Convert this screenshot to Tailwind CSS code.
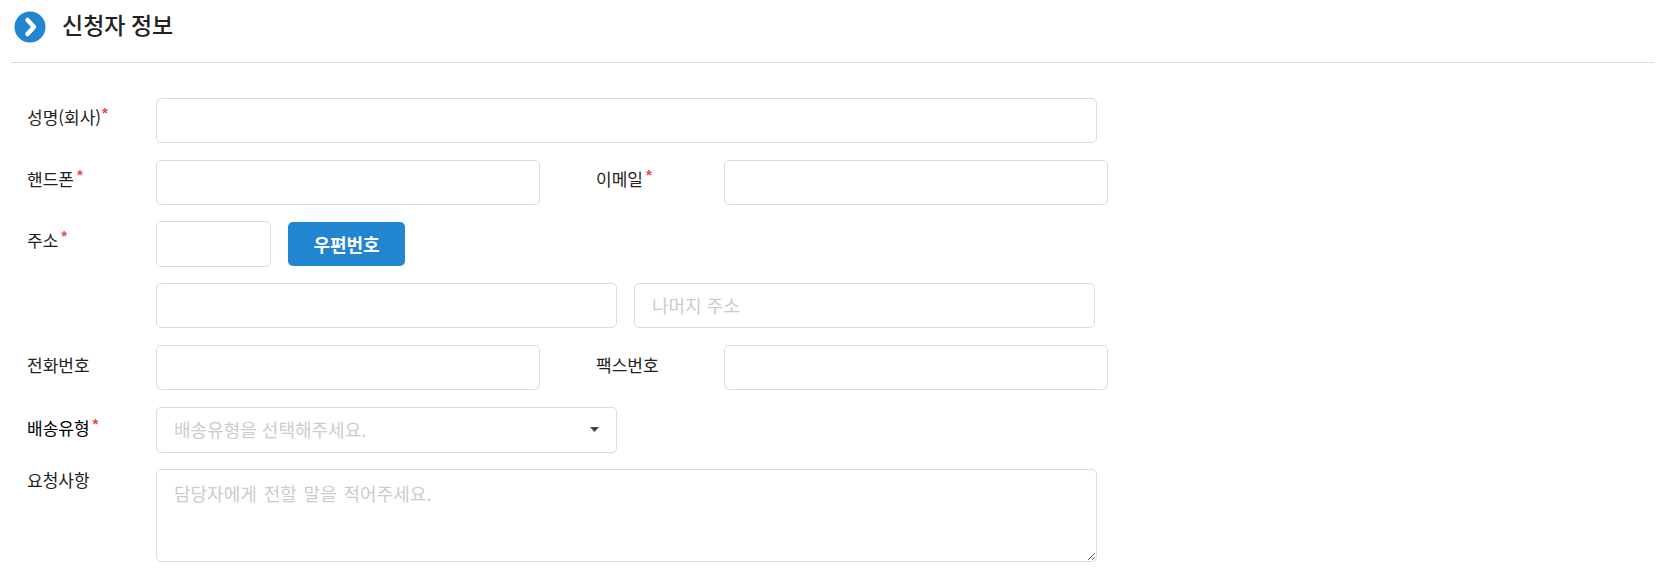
<!DOCTYPE html>
<html lang="ko">
<head>
    <meta charset="UTF-8" />
    <meta name="viewport" content="width=device-width, initial-scale=1.0" />
    <title>신청자 정보</title>
    <script src="https://cdn.jsdelivr.net/npm/@tailwindcss/browser@4"></script>
</head>
<body class="bg-white text-[#222] text-[17px] leading-[24px] font-['Noto_Sans_CJK_KR','Noto_Sans',sans-serif]">
    <div class="ml-[11px] mr-[15px] h-[63px] border-b border-[#ddd] flex items-start pt-[11px] pl-[3px]">
        <svg class="w-[32px] h-[32px] shrink-0" viewBox="0 0 32 32">
            <circle cx="16" cy="16" r="15.5" fill="#2185d0" />
            <path d="M13.5 9 L20 16 L13.5 23" fill="none" stroke="#fff" stroke-width="4.5" stroke-linecap="round" stroke-linejoin="round" />
        </svg>
        <h2 class="ml-[16px] -mt-[2px] text-[23px] leading-[30px] font-medium text-[#222] [word-spacing:-1px]">신청자 정보</h2>
    </div>

    <form class="pt-[35px] pl-[27px] flex flex-col gap-[16.7px]">
        <div class="flex items-start h-[45px]">
            <label class="w-[129px] pt-[7px]">성명(회사)<span class="text-[#e5484d] font-['Liberation_Sans'] font-bold text-[15px] leading-[16px] align-top ml-[1px]">*</span></label>
            <input type="text" class="w-[941px] h-[45px] border border-[#dcdcdc] rounded-[5px] px-[17px] bg-white" />
        </div>

        <div class="flex items-start h-[45px]">
            <label class="w-[129px] pt-[7px]">핸드폰<span class="text-[#e5484d] font-['Liberation_Sans'] font-bold text-[15px] leading-[16px] align-top ml-[3px]">*</span></label>
            <input type="text" class="w-[384px] h-[45px] border border-[#dcdcdc] rounded-[5px] px-[17px] bg-white" />
            <label class="w-[128px] ml-[56px] pt-[7px]">이메일<span class="text-[#e5484d] font-['Liberation_Sans'] font-bold text-[15px] leading-[16px] align-top ml-[3px]">*</span></label>
            <input type="text" class="w-[384px] h-[45px] border border-[#dcdcdc] rounded-[5px] px-[17px] bg-white" />
        </div>

        <div class="flex items-start h-[45px]">
            <label class="w-[129px] pt-[7px]">주소<span class="text-[#e5484d] font-['Liberation_Sans'] font-bold text-[15px] leading-[16px] align-top ml-[3px]">*</span></label>
            <input type="text" class="w-[115px] h-[46px] border border-[#dcdcdc] rounded-[5px] px-[17px] bg-white" />
            <button type="button" class="ml-[17px] mt-[1px] w-[117px] h-[44px] bg-[#2185d0] rounded-[5px] text-white text-[18px] font-bold">우편번호</button>
        </div>

        <div class="flex items-start h-[45px] pl-[129px] gap-[17px]">
            <input type="text" class="w-[461px] h-[45px] border border-[#dcdcdc] rounded-[5px] px-[17px] bg-white" />
            <input type="text" placeholder="나머지 주소" class="w-[461px] h-[45px] border border-[#dcdcdc] rounded-[5px] px-[17px] pb-[2px] bg-white text-[18px] placeholder:text-[#ccc]" />
        </div>

        <div class="flex items-start h-[45px]">
            <label class="w-[129px] pt-[8px]">전화번호</label>
            <input type="text" class="w-[384px] h-[45px] border border-[#dcdcdc] rounded-[5px] px-[17px] bg-white" />
            <label class="w-[128px] ml-[56px] pt-[8px]">팩스번호</label>
            <input type="text" class="w-[384px] h-[45px] border border-[#dcdcdc] rounded-[5px] px-[17px] bg-white" />
        </div>

        <div class="flex items-start h-[45px] mt-[0.5px]">
            <label class="w-[129px] pt-[9px] text-black">배송유형<span class="text-[#e5484d] font-['Liberation_Sans'] font-bold text-[15px] leading-[16px] align-top ml-[3px]">*</span></label>
            <div class="w-[461px] h-[46px] border border-[#dcdcdc] rounded-[5px] px-[17px] pb-[2px] flex items-center justify-between text-[18px] text-[#ccc]">
                <span>배송유형을 선택해주세요.</span>
                <svg class="w-[9px] h-[5px] mt-[2px]" viewBox="0 0 9 5"><path d="M0 0 H9 L4.5 5 Z" fill="#444" /></svg>
            </div>
        </div>

        <div class="flex items-start">
            <label class="w-[129px] -mt-[1px]">요청사항</label>
            <textarea placeholder="담당자에게 전할 말을 적어주세요." class="w-[941px] h-[93px] border border-[#dcdcdc] rounded-[5px] px-[17px] pt-[11px] pb-[9px] bg-white text-[18px] [word-spacing:1.8px] placeholder:text-[#ccc]"></textarea>
        </div>
    </form>
</body>
</html>
